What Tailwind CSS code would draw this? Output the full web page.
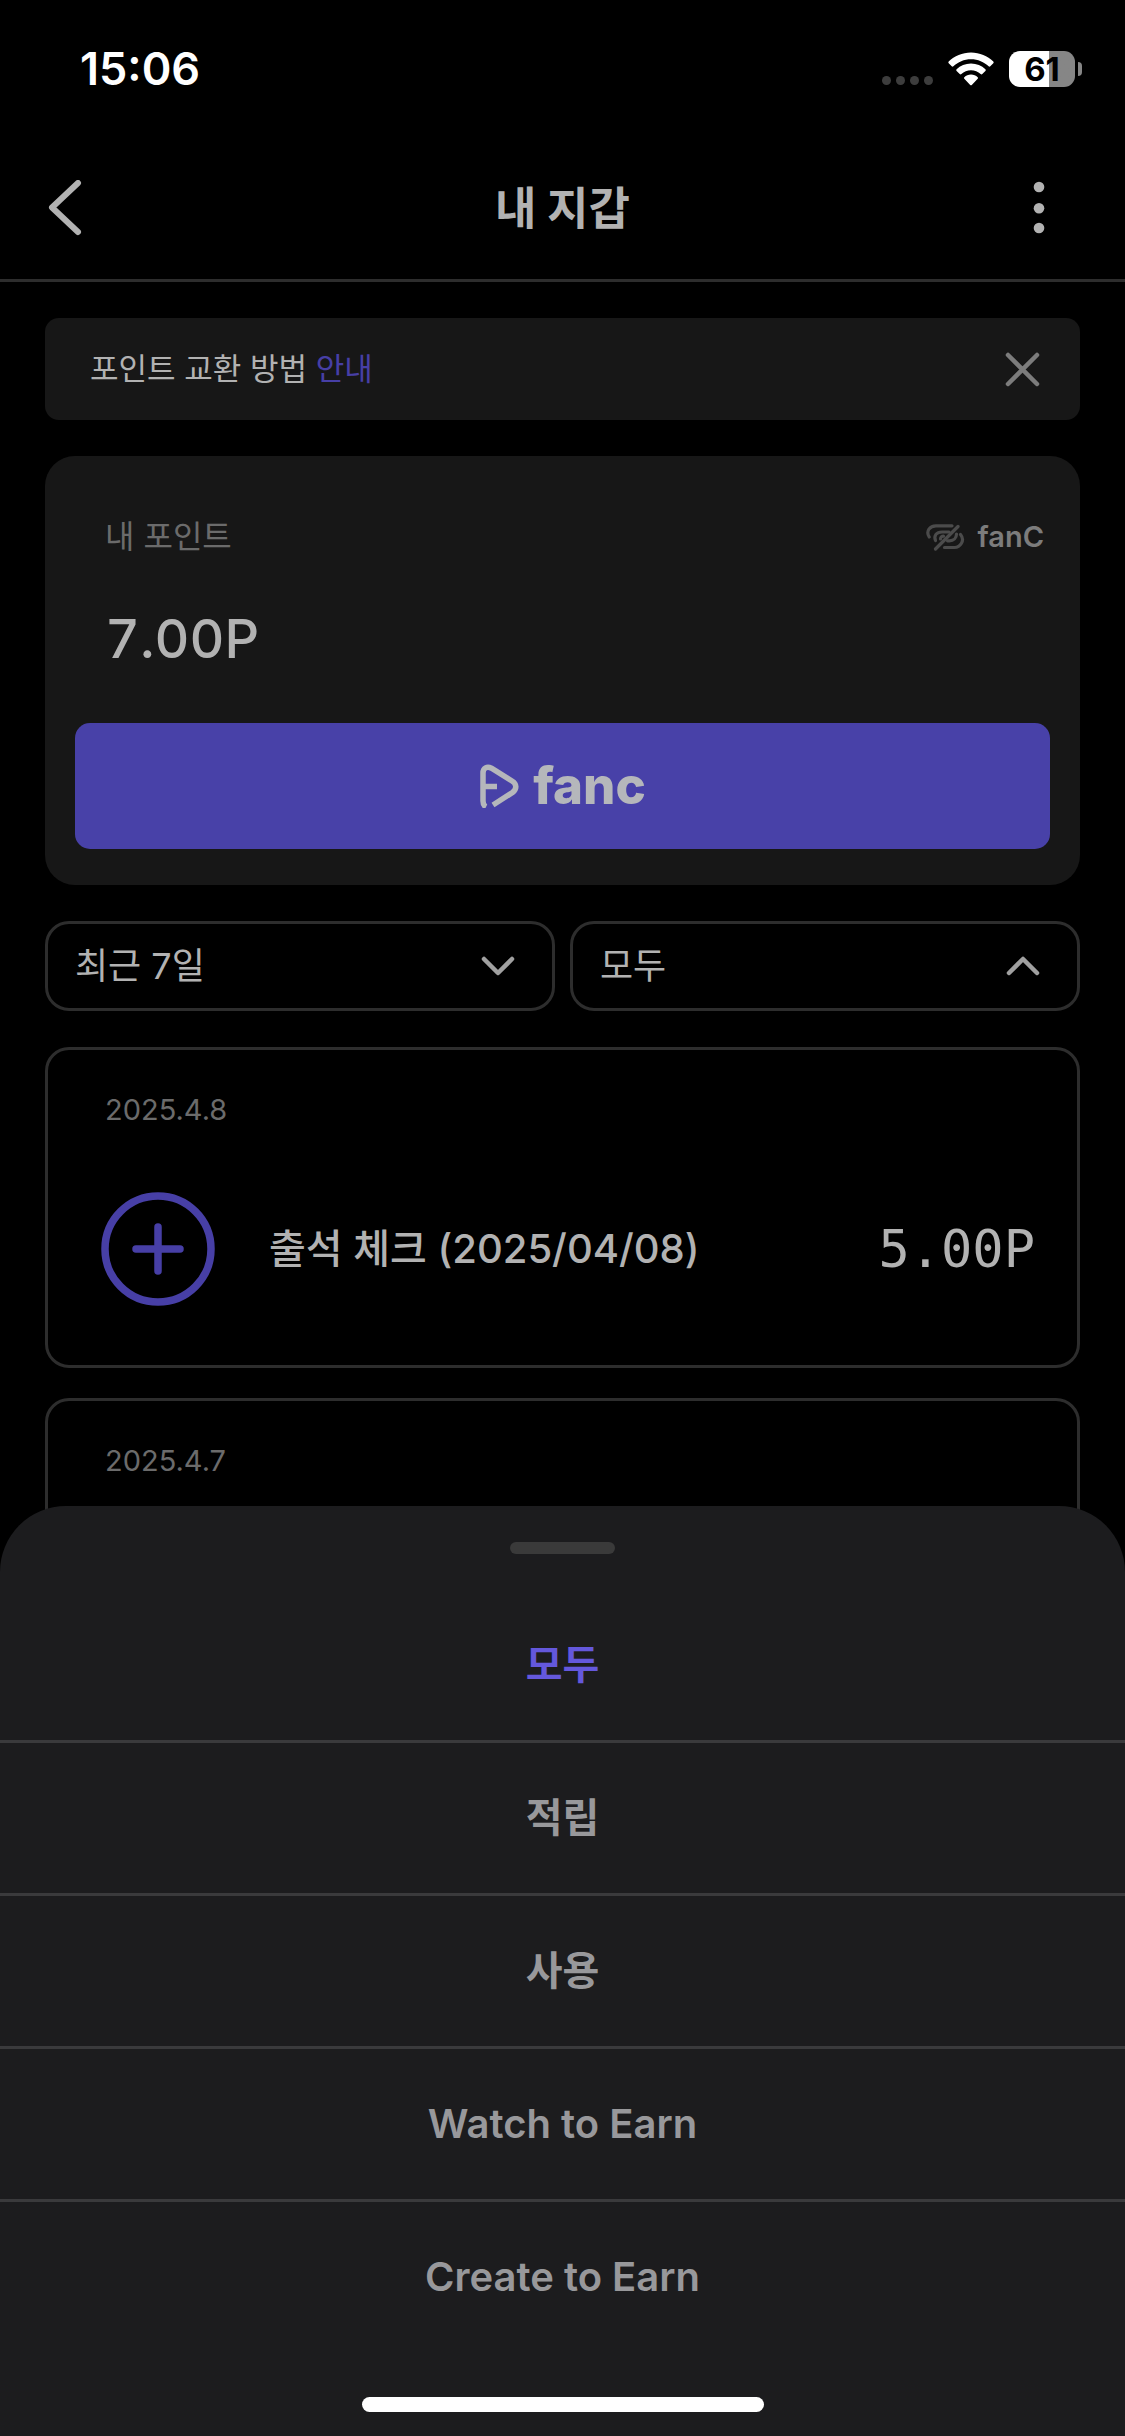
<!DOCTYPE html>
<html lang="ko">
<head>
<meta charset="utf-8">
<meta name="viewport" content="width=device-width, initial-scale=1">
<title>내 지갑</title>
<script src="https://cdn.jsdelivr.net/npm/@tailwindcss/browser@4"></script>
</head>
<body class="bg-black font-['Inter','Noto_Sans_CJK_KR',sans-serif] text-[#b2b2b2]">
<div class="relative min-h-screen overflow-hidden">

  <!-- Status bar -->
  <div class="flex h-[138px] items-center justify-between pr-[43px] pl-20 text-white">
    <time class="text-[45px] leading-[48px] font-semibold">15:06</time>
    <div class="flex items-center">
      <svg class="mt-[23px] mr-[15px] h-[9px] w-[51px]" viewBox="0 0 51 9" fill="#3d3d3d" aria-hidden="true"><circle cx="4.500" cy="4.500" r="4.500"/><circle cx="18.500" cy="4.500" r="4.500"/><circle cx="32.500" cy="4.500" r="4.500"/><circle cx="46.500" cy="4.500" r="4.500"/></svg>
      <svg class="mr-[15px] h-[34px] w-[46px]" viewBox="0 0 46 34" fill="#fff" aria-hidden="true">
        <path d="M23 .5C14.300.5 6.400 4 .7 9.600c-.5.5-.5 1.200 0 1.700l3 3c.5.500 1.200.5 1.700 0C9.900 9.900 16.100 7.200 23 7.200s13.100 2.700 17.600 7.100c.5.500 1.200.5 1.700 0l3-3c.5-.5.5-1.200 0-1.700C39.600 4 31.700.5 23 .5z"/>
        <path d="M23 11.500c-5.600 0-10.700 2.200-14.400 5.800-.5.5-.5 1.200 0 1.700l3.100 3.100c.5.500 1.200.5 1.700 0 2.500-2.400 5.900-3.900 9.600-3.900s7.100 1.500 9.600 3.900c.5.500 1.200.5 1.700 0l3.100-3.100c.5-.5.5-1.200 0-1.700-3.700-3.600-8.800-5.800-14.400-5.800z"/>
        <path d="M23 22.600c-2.600 0-4.900 1-6.700 2.600-.5.5-.5 1.100 0 1.600l5.900 6.200c.4.400 1.200.4 1.600 0l5.900-6.200c.5-.5.5-1.100 0-1.600-1.800-1.600-4.100-2.600-6.700-2.600z"/>
      </svg>
      <div class="flex h-9 w-[66px] items-center justify-center rounded-[11px] bg-linear-to-r from-white from-61% to-[#868686] to-61% text-[33px] leading-9 font-bold text-black">61</div>
      <div class="ml-[3px] h-[14px] w-1 rounded-r-full bg-[#868686]"></div>
    </div>
  </div>

  <!-- App bar -->
  <header class="flex h-36 items-center justify-between border-b-3 border-[#2d2d2d] px-[45px]">
    <button type="button" aria-label="뒤로" class="flex w-16 pl-[3px]">
      <svg class="h-[58px] w-[34px]" viewBox="0 0 34 58" fill="none" stroke="#b2b2b2" stroke-width="6" stroke-linecap="round" stroke-linejoin="round"><path d="M30 3 4 27.500 30 52"/></svg>
    </button>
    <h1 class="text-[45px] leading-[60px] font-bold">내 지갑</h1>
    <button type="button" aria-label="더 보기" class="flex w-16 justify-end pr-[35px]">
      <svg class="h-[56px] w-3" viewBox="0 0 12 56" fill="#b2b2b2"><circle cx="6" cy="6" r="5.300"/><circle cx="6" cy="27.300" r="5.300"/><circle cx="6" cy="47" r="5.300"/></svg>
    </button>
  </header>

  <main class="flex flex-col px-[45px] pt-9">
    <!-- Notice -->
    <div class="flex h-[102px] items-center justify-between rounded-[14px] bg-[#171717] pr-10 pl-[45px]">
      <p class="text-[31px] leading-[48px]">포인트 교환 방법 <a href="#guide" class="text-[#473fa6]">안내</a></p>
      <button type="button" aria-label="닫기">
        <svg class="h-[35px] w-[35px]" viewBox="0 0 35 35" stroke="#7c7c7c" stroke-width="4.500" stroke-linecap="round"><path d="M3 3 32 32M32 3 3 32"/></svg>
      </button>
    </div>

    <!-- Balance -->
    <section class="mt-9 rounded-[30px] bg-[#171717] px-[30px] pt-[57px] pb-9">
      <div class="flex items-center justify-between pr-[6px] pl-[30px]">
        <h2 class="text-[32px] leading-[48px] text-[#6b6b6b]">내 포인트</h2>
        <div class="flex items-center gap-3">
          <svg class="h-7 w-[39px]" viewBox="0 0 39 28" fill="none" stroke="#4b4b4b" stroke-width="3.200" stroke-linecap="round"><path d="M3.200 14C-.5 8 4 2.800 10 2.800h16"/><path d="M34.500 11.500c5 6-.5 13-6 13H18.500"/><path d="M9.500 17.500C7.500 12.500 10.500 9 16 9h7"/><path d="M30.500 11c0 4-3 6.800-7 6.800h-2"/><path d="M14.500 16c0-1.800 1.200-2.800 3-2.800"/><path d="M9.500 26 32 3.500"/></svg>
          <span class="text-[29px] leading-9 font-semibold text-[#7c7c7c]">fanC</span>
        </div>
      </div>
      <p class="mt-12 pl-[30px] text-[54px] leading-[60px] font-medium tabular-nums">7.00P</p>
      <button type="button" class="mt-[54px] flex h-[126px] w-full items-center justify-center gap-[14px] rounded-[15px] bg-[#4841a8] text-[#b5b7bb]">
        <svg class="h-11 w-10" viewBox="0 0 40 44" fill="none" stroke="currentColor" stroke-width="5.500"><path d="M7 43C5 42 4 40 4 37V9C4 4 8 2 12.500 4.200L33 17C38 20 38 25 33.500 28.500L14 41"/><path d="M4 22.500H18"/></svg>
        <span class="text-[51px] leading-[60px] font-extrabold">fanc</span>
      </button>
    </section>

    <!-- Filters -->
    <div class="mt-9 grid grid-cols-2 gap-[15px]">
      <div class="relative">
        <select aria-label="기간" class="h-[90px] w-full appearance-none rounded-3xl border-3 border-[#2d2d2d] bg-transparent px-[27px] text-[36px] leading-[48px]"><option>최근 7일</option></select>
        <svg class="pointer-events-none absolute top-[34px] right-[39px] h-[22px] w-[36px]" viewBox="0 0 36 22" fill="none" stroke="#a0a0a0" stroke-width="4.500" stroke-linecap="round" stroke-linejoin="round"><path d="M4 4 18 18 32 4"/></svg>
      </div>
      <div class="relative">
        <select aria-label="유형" class="h-[90px] w-full appearance-none rounded-3xl border-3 border-[#2d2d2d] bg-transparent px-[27px] text-[36px] leading-[48px]"><option>모두</option></select>
        <svg class="pointer-events-none absolute top-[34px] right-[39px] h-[22px] w-[36px]" viewBox="0 0 36 22" fill="none" stroke="#a0a0a0" stroke-width="4.500" stroke-linecap="round" stroke-linejoin="round"><path d="M4 18 18 4 32 18"/></svg>
      </div>
    </div>

    <!-- History -->
    <ul class="mt-9 flex flex-col gap-[30px]">
      <li class="h-[321px] rounded-3xl border-3 border-[#2d2d2d] px-[42px] pt-[42px]">
        <time class="block pl-[15px] text-[29px] leading-9 text-[#6b6b6b]">2025.4.8</time>
        <div class="mt-16 flex items-center pl-[11px]">
          <svg class="h-[114px] w-[114px] shrink-0" viewBox="0 0 114 114" fill="none" stroke="#473fa6" stroke-width="7.500" stroke-linecap="round"><circle cx="57" cy="57" r="53"/><path d="M57 35V79M35 57H79"/></svg>
          <span class="ml-[54px] flex-1 text-[40px] leading-[60px] font-medium">출석 체크 (2025/04/08)</span>
          <span class="font-['DejaVu_Sans_Mono',monospace] text-[52px] leading-[60px]">5.00P</span>
        </div>
      </li>
      <li class="h-[321px] rounded-3xl border-3 border-[#2d2d2d] px-[42px] pt-[42px]">
        <time class="block pl-[15px] text-[29px] leading-9 text-[#6b6b6b]">2025.4.7</time>
      </li>
    </ul>
  </main>

  <!-- Bottom sheet -->
  <div role="dialog" aria-label="유형 선택" class="absolute inset-x-0 bottom-0 flex flex-col items-center rounded-t-[66px] bg-[#1c1c1e] pt-9 pb-6">
    <div class="h-3 w-[105px] rounded-full bg-[#3a3a3a]"></div>
    <div class="mt-9 flex w-full flex-col divide-y-3 divide-[#3a3a3c] text-[40px] leading-[60px] font-semibold text-[#98989b]">
      <button type="button" class="h-[153px] text-[#6458dc]">모두</button>
      <button type="button" class="h-[153px]">적립</button>
      <button type="button" class="h-[153px]">사용</button>
      <button type="button" class="h-[153px]">Watch to Earn</button>
      <button type="button" class="h-[150px]">Create to Earn</button>
    </div>
    <div class="mt-[45px] h-[15px] w-[402px] rounded-full bg-white"></div>
  </div>
</div>
</body>
</html>
